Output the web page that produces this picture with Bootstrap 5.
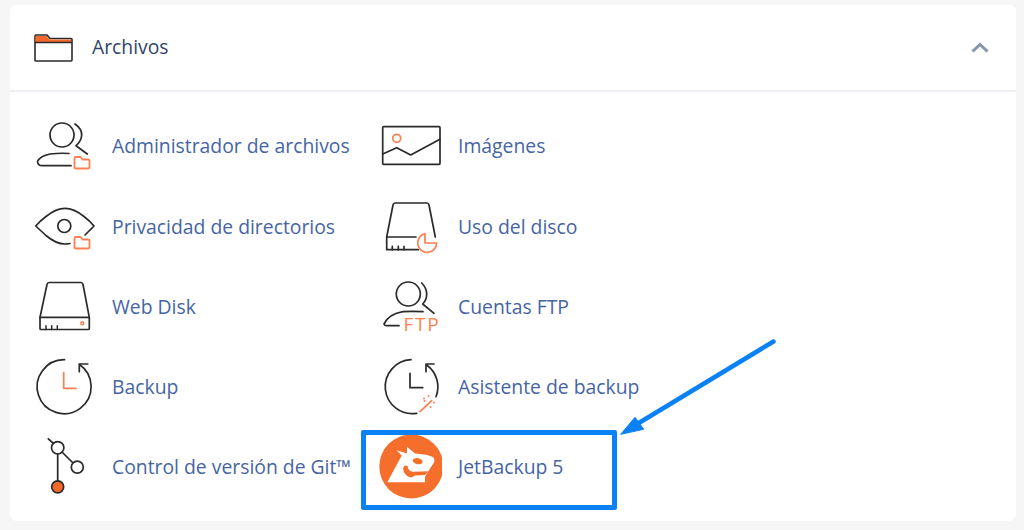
<!DOCTYPE html>
<html lang="es">
<head>
    <meta charset="UTF-8">
    <meta name="viewport" content="width=device-width, initial-scale=1.0">
    <title>Archivos</title>
    <link href="https://cdn.jsdelivr.net/npm/bootstrap@5.3.1/dist/css/bootstrap.min.css" rel="stylesheet">
    <style>
        html, body { height: 530px; overflow: hidden; }
        body { background: #f6f6f6; font-family: "Open Sans", "Liberation Sans", sans-serif; }
        .files-card { margin: 5px 8px 0 10px; height: 516px; border: 0; border-radius: 7px; }
        .files-head { height: 87px; padding: 0 27px 0 24px; background: #fff; border-bottom: 2px solid #eff0f6; }
        .files-title { font-size: 19.3px; color: #2f4468; margin-left: 19px; }
        .tool-grid { display: grid; grid-template-columns: repeat(2, 346px); grid-auto-rows: 80.3px; padding: 13.6px 22px 0; }
        .tool-item { gap: 16px; font-size: 19.35px; color: #4565a3; text-decoration: none; white-space: nowrap; }
        .tool-ico { width: 64px; height: 64px; flex: none; fill: none; stroke: #2a2a2a; stroke-width: 1.7; stroke-linecap: round; stroke-linejoin: round; }
        .tool-ico .hot { stroke: #ff7f50; }
        .tool-ico .dot { fill: #ff7f50; stroke: none; }
        .ftp-label { font-family: "Open Sans", sans-serif; font-size: 19px; letter-spacing: 1.8px; fill: #ff7f50; stroke: none; }
        .mark-box { position: absolute; left: 361px; top: 430px; width: 256px; height: 80px; border: 5px solid #0a82f6; border-radius: 2px; }
        .mark-arrow { position: absolute; left: 0; top: 0; pointer-events: none; }
    </style>
</head>
<body>
    <svg width="0" height="0" class="position-absolute">
        <symbol id="mini-folder" viewBox="0 0 64 64" overflow="visible">
            <path d="M42.500 54V44.500q0-1.500 1.500-1.500h4.500l2 2.500h5.500q1.500 0 1.500 1.500v6q0 1.500-1.500 1.500H44q-1.500 0-1.500-.5z" fill="none" stroke="#ff7f50" stroke-width="1.800"/>
        </symbol>
    </svg>

    <div class="card files-card">
        <div class="files-head d-flex align-items-center rounded-top">
            <svg width="39" height="28" viewBox="0 0 39 28">
                <path d="M1 27V2q0-1 1-1h11l3 3.500h21q1 0 1 1V26q0 1-1 1H2q-1 0-1-1z" fill="#fff" stroke="#2a2a2a" stroke-width="1.600"/>
                <path d="M1.500 2h11l3 3.500h21.500v2.500H1.500z" fill="#f4682a"/>
                <path d="M1 8.500h37" stroke="#2a2a2a" stroke-width="1.400"/>
            </svg>
            <span class="files-title">Archivos</span>
            <svg class="ms-auto" width="18" height="11" viewBox="0 0 18 11">
                <path d="M1.500 9.500L9 2.500l7.500 7" fill="none" stroke="#8593ad" stroke-width="3"/>
            </svg>
        </div>
        <div class="tool-grid">
            <a href="#" class="tool-item d-flex align-items-center">
                <svg class="tool-ico" viewBox="0 0 64 64">
                    <circle cx="30" cy="21" r="12"/>
                    <path d="M43 10q7 5 6.700 11T44 31.700L55.300 40"/>
                    <path d="M37 39.500Q28 38.800 18 40 8 42 5.500 47.500 6 51.700 10 51.700H39"/>
                    <use href="#mini-folder" width="64" height="64"/>
                </svg>
                Administrador de archivos
            </a>
            <a href="#" class="tool-item d-flex align-items-center">
                <svg class="tool-ico" viewBox="0 0 64 64">
                    <rect x="4.700" y="12.700" width="57.300" height="37.600" rx="1"/>
                    <path d="M4.700 40l14-6.300 14 7.300L62 25.300"/>
                    <circle class="hot" cx="18.700" cy="24.300" r="4"/>
                </svg>
                Imágenes
            </a>
            <a href="#" class="tool-item d-flex align-items-center">
                <svg class="tool-ico" viewBox="0 0 64 64">
                    <path d="M38 49.500Q35 50 33 50 24 50 14 41.500L3.700 32Q8 27 14 22.500 24 14.300 33 14.300T52 22.500Q58 27 62 32L53 41"/>
                    <circle cx="32.300" cy="32" r="6.500"/>
                    <use href="#mini-folder" width="64" height="64"/>
                </svg>
                Privacidad de directorios
            </a>
            <a href="#" class="tool-item d-flex align-items-center">
                <svg class="tool-ico" viewBox="0 0 64 64">
                    <path d="M8.700 43L15 11q.5-2 2-2h32q1.500 0 2 2L57.300 43"/>
                    <path d="M38 43H8.700V55.700H40.300"/>
                    <path d="M14.300 52.400v3.300M20.300 52.400v3.300M26 52.400v3.300"/>
                    <path class="hot" d="M47 39.700A9.500 9.500 0 1 0 58.700 49H47z"/>
                </svg>
                Uso del disco
            </a>
            <a href="#" class="tool-item d-flex align-items-center">
                <svg class="tool-ico" viewBox="0 0 64 64">
                    <path d="M8 43.300L15 10.500q.5-2 2-2h32q1.500 0 2 2L57.300 43.300V54.500q0 1-1 1H9q-1 0-1-1z"/>
                    <path d="M8 43.300h49.300"/>
                    <path d="M14 51.700v3.700M19.700 51.700v3.700M25.300 51.700v3.700" stroke-width="1.500"/>
                    <circle class="hot" cx="50.300" cy="49.300" r="1.500" stroke-width="1.400"/>
                </svg>
                Web Disk
            </a>
            <a href="#" class="tool-item d-flex align-items-center">
                <svg class="tool-ico" viewBox="0 0 64 64">
                    <circle cx="30.300" cy="20" r="12"/>
                    <path d="M43.700 9q5 5 5 11t-4 10L56 39.300"/>
                    <path d="M45 37.700Q34 37 25 37.700 11 40 6 50q.7 1.700 2.700 1.700H21"/>
                    <text class="ftp-label" x="25.500" y="57">FTP</text>
                </svg>
                Cuentas FTP
            </a>
            <a href="#" class="tool-item d-flex align-items-center">
                <svg class="tool-ico" viewBox="0 0 64 64">
                    <path d="M32.500 4.700A27 27 0 1 0 47.500 9.500"/>
                    <path d="M47.300 16.700V9H55.700"/>
                    <path class="hot" d="M31.700 17.700V33.300H44"/>
                </svg>
                Backup
            </a>
            <a href="#" class="tool-item d-flex align-items-center">
                <svg class="tool-ico" viewBox="0 0 64 64">
                    <path d="M33 4.700A27 27 0 1 0 38.700 58.300"/>
                    <path d="M48.700 10A27 27 0 0 1 58 41.700"/>
                    <path d="M48 16.700V9H56"/>
                    <path d="M32 18.300V32.700H44.700"/>
                    <path class="hot" d="M42 56.700L53.700 45.700"/>
                    <circle class="dot" cx="50.500" cy="41" r="1"/><circle class="dot" cx="46" cy="43.500" r="1"/>
                    <circle class="dot" cx="56" cy="47.500" r="1"/><circle class="dot" cx="52.500" cy="52" r="1"/>
                    <circle class="dot" cx="46.500" cy="46" r="1"/>
                </svg>
                Asistente de backup
            </a>
            <a href="#" class="tool-item d-flex align-items-center">
                <svg class="tool-ico" viewBox="0 0 64 64">
                    <path d="M16.300 3.800L21.500 8.500M25.700 19V46M30 17l10.500 10.500"/>
                    <circle cx="25.700" cy="12.800" r="6.200"/>
                    <circle cx="45.300" cy="32.200" r="6"/>
                    <circle cx="25.700" cy="51.800" r="6" fill="#f4682a"/>
                </svg>
                Control de versión de Git™
            </a>
            <a href="#" class="tool-item d-flex align-items-center">
                <svg class="tool-ico" viewBox="0 0 64 64" style="stroke:none">
                    <circle cx="33.300" cy="31.500" r="32" fill="#f66e2b"/>
                    <path d="M18.700 15.200L29 18.500 29 11.800 37 18.500 46 19.500Q53 20.500 56 23 57 27 55 29L50.300 36.200 47 41.800V47.200H9.300L23.700 20.500z" fill="#fff"/>
                    <path d="M25 33.500Q26 29.500 29.500 31 30 36 35 36.800L50.300 36.200 47 40 37 40.500 33.500 42.500Q26 41 25 33.500z" fill="#f66e2b"/>
                    <ellipse cx="39.700" cy="26.200" rx="5" ry="3" transform="rotate(12 39.700 26.200)" fill="#f66e2b"/>
                </svg>
                JetBackup 5
            </a>
        </div>
    </div>

    <div class="mark-box"></div>
    <svg class="mark-arrow" width="1024" height="530" viewBox="0 0 1024 530">
        <path d="M773.500 341.500L638 423.500" stroke="#0a82f6" stroke-width="4.500" stroke-linecap="round" fill="none"/>
        <path d="M620.700 434.300L635 417.300 643.700 429.300z" fill="#0a82f6" stroke="#0a82f6" stroke-width="1"/>
    </svg>

    <script src="https://cdn.jsdelivr.net/npm/bootstrap@5.3.1/dist/js/bootstrap.bundle.min.js"></script>
</body>
</html>
